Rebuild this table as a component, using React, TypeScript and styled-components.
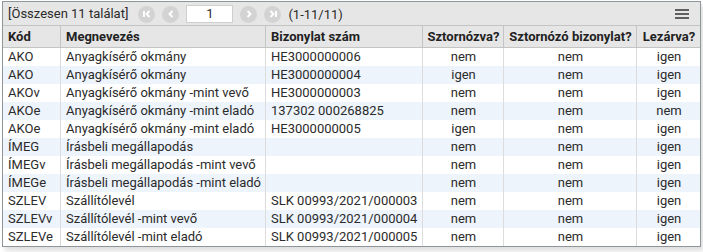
import React from 'react';
import styled, { createGlobalStyle } from 'styled-components';

const GlobalStyle = createGlobalStyle`
  body {
    margin: 0;
    background: #ffffff;
    font-family: Roboto, "Liberation Sans", Arial, sans-serif;
  }
`;

const Page = styled.div`
  padding: 1px 0 0 2px;
  width: 703px;
  height: 252px;
  box-sizing: border-box;
`;

const Grid = styled.div`
  width: 697px;
  border: 1px solid #8f9699;
  box-shadow: 3px 4px 5px rgba(0, 0, 0, 0.13);
  font-size: 13px;
  color: #2b2b2b;
  background: #fff;
`;

const Toolbar = styled.div`
  display: flex;
  align-items: center;
  height: 23px;
  padding: 0 4px 0 5px;
  background: #e6e6e6;
  border-bottom: 1px solid #c4c4c4;
  white-space: nowrap;
`;

const Summary = styled.span`
  margin-right: 10px;
`;

const Pager = styled.div`
  display: flex;
  align-items: center;
  gap: 7px;
  margin-top: 1px;
`;

const PageButton = styled.span`
  display: inline-flex;
  align-items: center;
  justify-content: center;
  width: 17px;
  height: 17px;
  border-radius: 50%;
  background: #d3d3d3;
`;

const PageInput = styled.div`
  width: 45px;
  height: 16px;
  background: #fff;
  border: 1px solid #cfcfcf;
  text-align: center;
  line-height: 16px;
`;

const Range = styled.span``;

const Spacer = styled.div`
  flex: 1;
`;

const Menu = styled.div`
  display: flex;
  flex-direction: column;
  gap: 2px;
  width: 14px;
  margin-right: 7px;
  margin-top: 1px;

  span {
    display: block;
    height: 2px;
    background: #5f5f5f;
  }
`;

const cols = '58px 205px 157px 81px 133px 1fr';

const Row = styled.div<{ $head?: boolean; $alt?: boolean }>`
  display: grid;
  grid-template-columns: ${cols};
  height: ${(p) => (p.$head ? '21px' : '18px')};
  background: ${(p) => (p.$head ? '#e6e6e6' : p.$alt ? '#eef4fc' : '#ffffff')};
  border-bottom: ${(p) => (p.$head ? '1px solid #c4c4c4' : 'none')};
  font-weight: ${(p) => (p.$head ? 700 : 400)};
  color: ${(p) => (p.$head ? '#222' : '#2b2b2b')};
`;

const Cell = styled.div<{ $center?: boolean; $head?: boolean; $last?: boolean }>`
  display: flex;
  align-items: center;
  justify-content: ${(p) => (p.$center ? 'center' : 'flex-start')};
  padding: 0 4px 0 5px;
  border-right: ${(p) => (p.$last ? 'none' : p.$head ? '1px solid #c4c4c4' : '1px solid #dcdcdc')};
  white-space: nowrap;
  overflow: hidden;
  line-height: 18px;
`;

const Chevron: React.FC<{ dir: 'first' | 'prev' | 'next' | 'last' }> = ({ dir }) => {
  const flip = dir === 'first' || dir === 'prev';
  const edge = dir === 'first' || dir === 'last';
  return (
    <svg width="10" height="10" viewBox="0 0 10 10" style={{ transform: flip ? 'scaleX(-1)' : undefined }}>
      <path d={edge ? 'M2.5 2 L5.5 5 L2.5 8' : 'M3.5 2 L6.5 5 L3.5 8'} fill="none" stroke="#fff" strokeWidth="1.9" />
      {edge && <path d="M8 2 V8" stroke="#fff" strokeWidth="1.9" />}
    </svg>
  );
};

type Item = { kod: string; nev: string; szam: string; sztorno: string; sztornozo: string; lezarva: string };

const items: Item[] = [
  { kod: 'AKO', nev: 'Anyagkísérő okmány', szam: 'HE3000000006', sztorno: 'nem', sztornozo: 'nem', lezarva: 'igen' },
  { kod: 'AKO', nev: 'Anyagkísérő okmány', szam: 'HE3000000004', sztorno: 'igen', sztornozo: 'nem', lezarva: 'igen' },
  { kod: 'AKOv', nev: 'Anyagkísérő okmány -mint vevő', szam: 'HE3000000003', sztorno: 'nem', sztornozo: 'nem', lezarva: 'igen' },
  { kod: 'AKOe', nev: 'Anyagkísérő okmány -mint eladó', szam: '137302 000268825', sztorno: 'nem', sztornozo: 'nem', lezarva: 'nem' },
  { kod: 'AKOe', nev: 'Anyagkísérő okmány -mint eladó', szam: 'HE3000000005', sztorno: 'igen', sztornozo: 'nem', lezarva: 'igen' },
  { kod: 'ÍMEG', nev: 'Írásbeli megállapodás', szam: '', sztorno: 'nem', sztornozo: 'nem', lezarva: 'igen' },
  { kod: 'ÍMEGv', nev: 'Írásbeli megállapodás -mint vevő', szam: '', sztorno: 'nem', sztornozo: 'nem', lezarva: 'igen' },
  { kod: 'ÍMEGe', nev: 'Írásbeli megállapodás -mint eladó', szam: '', sztorno: 'nem', sztornozo: 'nem', lezarva: 'igen' },
  { kod: 'SZLEV', nev: 'Szállítólevél', szam: 'SLK 00993/2021/000003', sztorno: 'nem', sztornozo: 'nem', lezarva: 'igen' },
  { kod: 'SZLEVv', nev: 'Szállítólevél -mint vevő', szam: 'SLK 00993/2021/000004', sztorno: 'nem', sztornozo: 'nem', lezarva: 'igen' },
  { kod: 'SZLEVe', nev: 'Szállítólevél -mint eladó', szam: 'SLK 00993/2021/000005', sztorno: 'nem', sztornozo: 'nem', lezarva: 'igen' },
];

const App: React.FC = () => {
  return (
    <>
      <GlobalStyle />
      <Page>
        <Grid>
          <Toolbar>
            <Summary>[Összesen 11 találat]</Summary>
            <Pager>
              <PageButton><Chevron dir="first" /></PageButton>
              <PageButton><Chevron dir="prev" /></PageButton>
              <PageInput>1</PageInput>
              <PageButton><Chevron dir="next" /></PageButton>
              <PageButton><Chevron dir="last" /></PageButton>
              <Range>(1-11/11)</Range>
            </Pager>
            <Spacer />
            <Menu>
              <span />
              <span />
              <span />
            </Menu>
          </Toolbar>

          <Row $head>
            <Cell $head>Kód</Cell>
            <Cell $head>Megnevezés</Cell>
            <Cell $head>Bizonylat szám</Cell>
            <Cell $head $center>Sztornózva?</Cell>
            <Cell $head $center>Sztornózó bizonylat?</Cell>
            <Cell $head $center $last>Lezárva?</Cell>
          </Row>

          {items.map((it, i) => (
            <Row key={i} $alt={i % 2 === 1}>
              <Cell>{it.kod}</Cell>
              <Cell>{it.nev}</Cell>
              <Cell>{it.szam}</Cell>
              <Cell $center>{it.sztorno}</Cell>
              <Cell $center>{it.sztornozo}</Cell>
              <Cell $center $last>{it.lezarva}</Cell>
            </Row>
          ))}
        </Grid>
      </Page>
    </>
  );
};

export default App;
